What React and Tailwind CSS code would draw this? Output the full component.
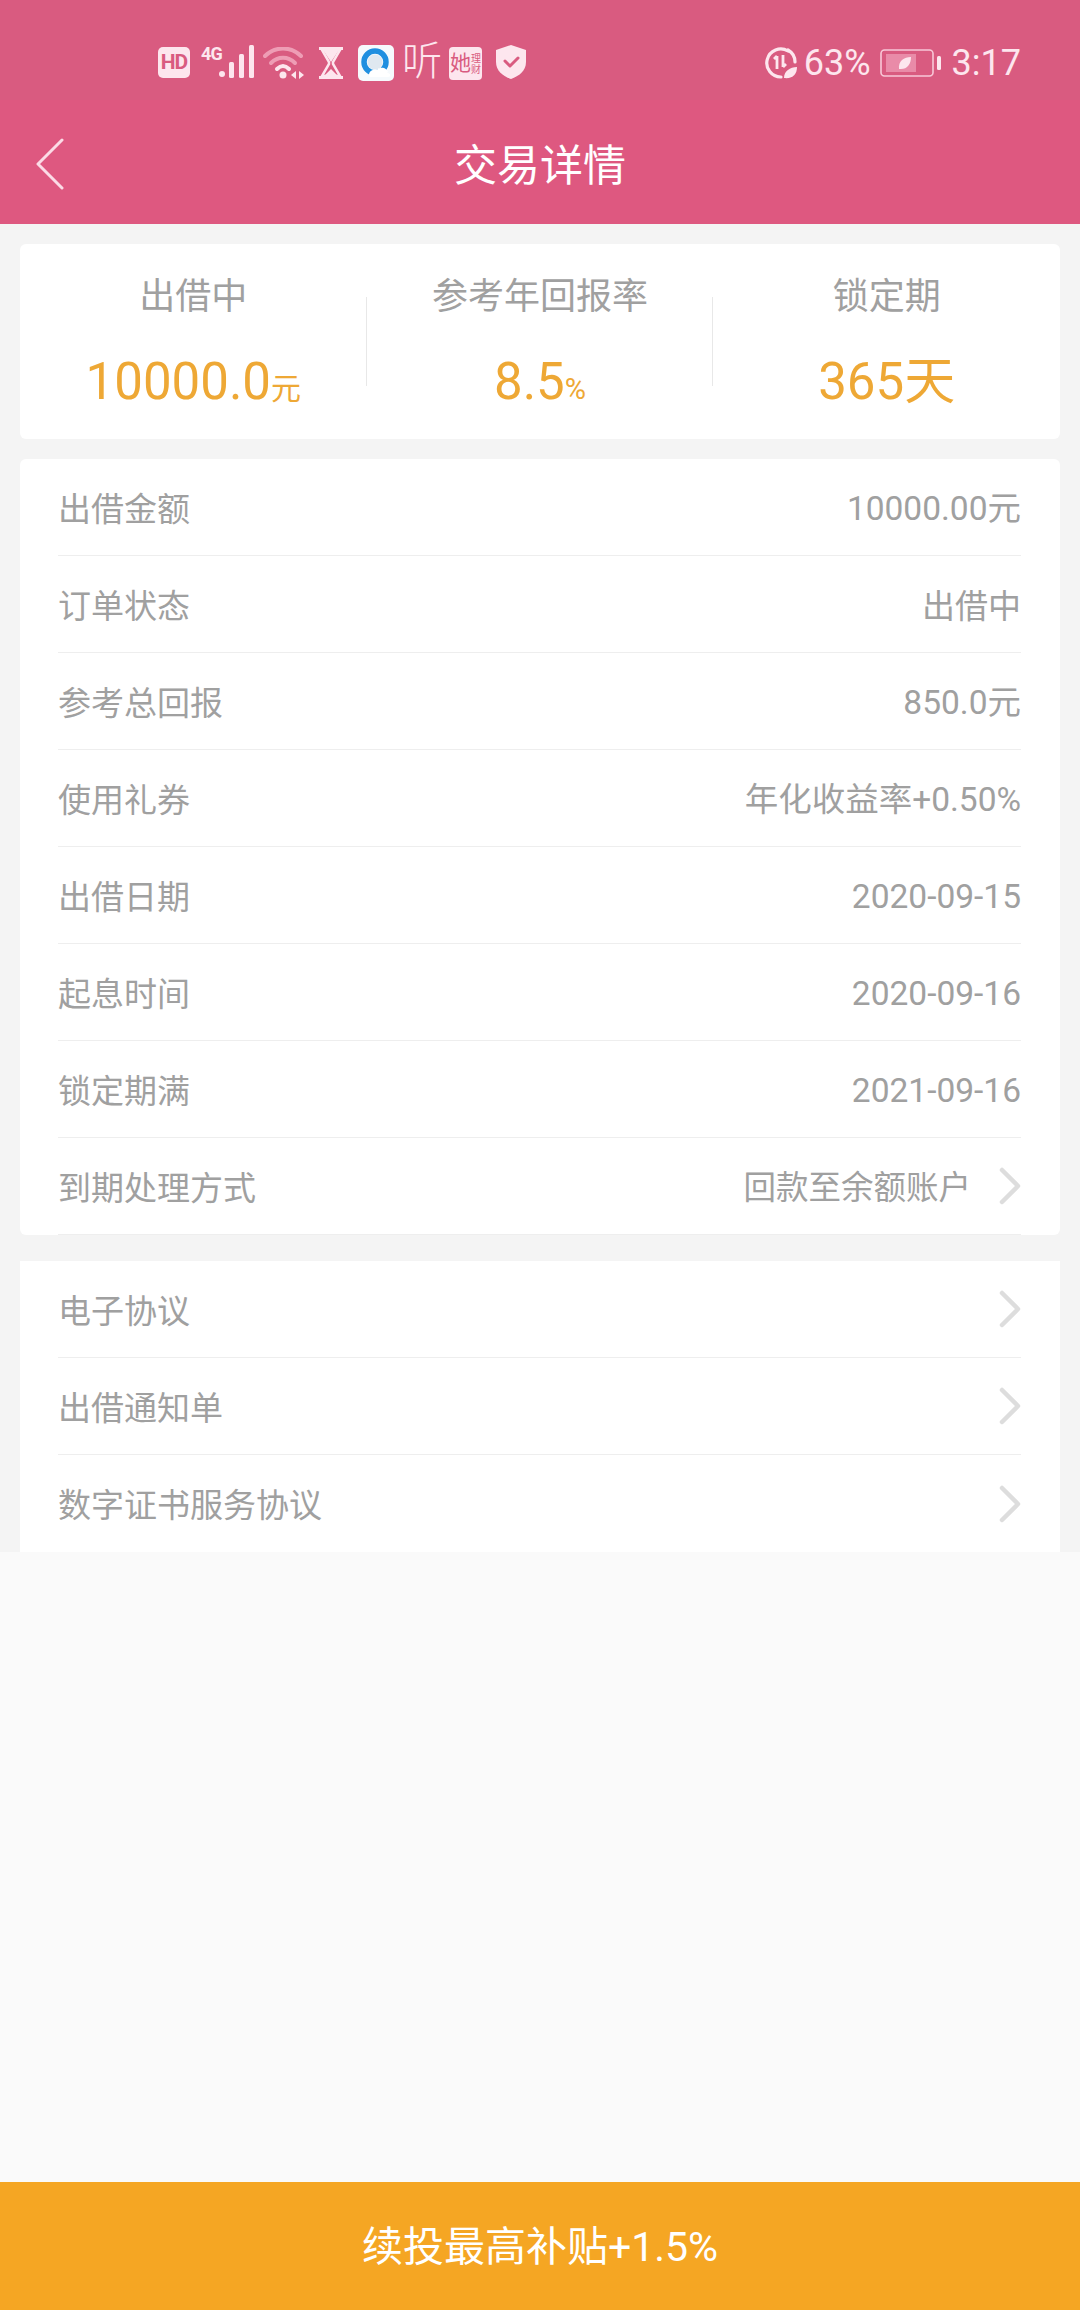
import React from "react";

const font = { fontFamily: '"Roboto", "Noto Sans CJK SC", sans-serif' };

const details = [
  { label: "出借金额", value: "10000.00元", wide: true },
  { label: "订单状态", value: "出借中" },
  { label: "参考总回报", value: "850.0元", wide: true },
  { label: "使用礼券", value: "年化收益率+0.50%", wide: true },
  { label: "出借日期", value: "2020-09-15", wide: true },
  { label: "起息时间", value: "2020-09-16", wide: true },
  { label: "锁定期满", value: "2021-09-16", wide: true },
  { label: "到期处理方式", value: "回款至余额账户", arrow: true },
];

const links = ["电子协议", "出借通知单", "数字证书服务协议"];

function Chevron() {
  return (
    <svg width="22" height="38" viewBox="0 0 22 38" className="ml-[28px] shrink-0">
      <path d="M3 3 L19 19 L3 35" fill="none" stroke="#dddddd" strokeWidth="4.5" strokeLinecap="round" strokeLinejoin="round" />
    </svg>
  );
}

function Row({ label, value, arrow, wide, last }) {
  return (
    <div className={`flex h-[97px] items-center justify-between text-[33px] text-[#a0a0a0] ${last ? "" : "border-b border-[#eeeeee]"}`}>
      <span className="mt-[5px]">{label}</span>
      <div className="flex items-center">
        {value && <span className={`mt-[5px] ${wide ? "text-[33.5px]" : ""} ${arrow ? "text-[32.5px]" : ""}`}>{value}</span>}
        {arrow && <Chevron />}
      </div>
    </div>
  );
}

function Stat({ label, children, divider }) {
  return (
    <div className="relative flex flex-1 flex-col items-center pt-[31px]">
      <span className="text-[36px] leading-[44px] text-[#a0a0a0]">{label}</span>
      <div className="mt-[33px] flex h-[60px] items-baseline text-[51px] leading-[60px] text-[#eea835]">{children}</div>
      {divider && <div className="absolute right-0 top-[53px] h-[89px] w-px bg-[#e8e8e8]" />}
    </div>
  );
}

function StatusIcons() {
  return (
    <div className="flex items-start">
      <div className="flex h-[31px] w-[32px] items-center justify-center rounded-[5px] bg-[#fde6ee] text-[21px] font-bold leading-none tracking-tighter text-[#d95b80]">HD</div>
      <div className="relative ml-[11px] h-[32px] w-[53px]">
        <span className="absolute left-0 top-[-3px] text-[18px] font-bold leading-[20px] tracking-tighter text-[#fde6ee]">4G</span>
        <svg width="36" height="33" viewBox="0 0 36 33" className="absolute left-[18px] top-[-2px]">
          <g fill="#fde6ee">
            <circle cx="3" cy="29" r="3" />
            <rect x="10" y="17" width="5" height="16" rx="1.5" />
            <rect x="20" y="9" width="5" height="24" rx="1.5" />
            <rect x="30" y="0" width="5" height="33" rx="1.5" />
          </g>
        </svg>
      </div>
      <svg width="42" height="32" viewBox="0 0 42 32" className="ml-[9px]">
        <g fill="none" strokeLinecap="round">
          <path d="M2 9 C12 -1 28 -1 38 9" stroke="#ee9db5" strokeWidth="4" />
          <path d="M8 16 C15 9 25 9 32 16" stroke="#ee9db5" strokeWidth="4" />
          <path d="M14 22 C18 18 22 18 26 22" stroke="#fde6ee" strokeWidth="4" />
        </g>
        <circle cx="20" cy="28" r="3.5" fill="#fde6ee" />
        <path d="M33 24 L28 28 L33 32 Z" fill="#fde6ee" />
        <path d="M36 24 L41 28 L36 32 Z" fill="#fde6ee" />
      </svg>
      <svg width="26" height="32" viewBox="0 0 26 32" className="ml-[13px]">
        <path d="M1 1.5 H25 M1 30.5 H25" stroke="#fde6ee" strokeWidth="3" />
        <path d="M4 3 H22 L15 15 V17 L22 29 H4 L11 17 V15 Z" fill="none" stroke="#fde6ee" strokeWidth="2.5" />
        <path d="M5 3 H21 L13 15 Z M13 22 L20 29 H6 Z" fill="#fde6ee" />
      </svg>
      <svg width="36" height="36" viewBox="0 0 36 36" className="ml-[14px] mt-[-2px]">
        <rect width="36" height="36" rx="5" fill="#f6fafd" />
        <circle cx="17" cy="17" r="11" fill="none" stroke="#1f8fe0" strokeWidth="5.5" />
        <circle cx="17" cy="17" r="7.5" fill="#dfe8f0" />
        <path d="M24 24 L28 29" stroke="#1f8fe0" strokeWidth="4" />
        <path d="M11 30 C11 25 16 24 19 25 C22 21 30 23 30 28 C33 29 33 32 30 32 H13 C11 32 11 31 11 30 Z" fill="#ffffff" />
      </svg>
      <span className="ml-[8px] mt-[-8px] text-[40px] font-light leading-[46px] text-[#fde6ee]">听</span>
      <div className="ml-[7px] flex h-[33px] w-[33px] items-center justify-center rounded-[4px] bg-[#fde6ee] text-[#d95b80]">
        <span className="text-[21px] leading-none">她</span>
        <span className="w-[10px] text-[10px] leading-[11px]">理财</span>
      </div>
      <svg width="32" height="36" viewBox="0 0 32 36" className="ml-[13px] mt-[-3px]">
        <path d="M16 1 L31 6 V18 C31 27 24 32 16 35 C8 32 1 27 1 18 V6 Z" fill="#fde6ee" />
        <path d="M10 17 L15 22 L23 14" fill="none" stroke="#d95b80" strokeWidth="3" strokeLinecap="round" strokeLinejoin="round" />
      </svg>
    </div>
  );
}

function StatusRight() {
  return (
    <div className="flex items-center text-[36px] leading-[32px] text-[#fde6ee]">
      <svg width="34" height="32" viewBox="0 0 34 32">
        <path d="M24 4 A14 14 0 1 0 17 30" fill="none" stroke="#fde6ee" strokeWidth="3.2" strokeLinecap="round" />
        <path d="M24 3 A14 14 0 0 1 31 15" fill="none" stroke="#fde6ee" strokeWidth="3.2" strokeLinecap="round" />
        <path d="M13 9 V22 M13 9 L10 12 M19 8 V20 M19 20 L22 17" fill="none" stroke="#fde6ee" strokeWidth="2.8" />
        <path d="M20 31 C20 24 26 20 33 20 C33 27 29 32 20 31 Z" fill="#fde6ee" />
      </svg>
      <span className="ml-[6px]">63%</span>
      <svg width="62" height="28" viewBox="0 0 62 28" className="ml-[9px]">
        <rect x="1" y="1" width="52" height="26" rx="3.5" fill="none" stroke="#f8c8d7" strokeWidth="1.6" />
        <rect x="6" y="5" width="30" height="18" fill="#e98ba8" />
        <path d="M19 20 C18 12 24 8 31 8 C31 15 27 21 19 20 Z" fill="#fde6ee" />
        <rect x="57" y="7" width="4" height="14" rx="1.5" fill="#fde6ee" />
      </svg>
      <span className="ml-[10px]">3:17</span>
    </div>
  );
}

export default function App() {
  return (
    <div className="flex h-[2310px] w-[1080px] flex-col overflow-hidden bg-[#fafafa]" style={font}>
      <header className="h-[224px] shrink-0 bg-[#de5880]">
        <div className="flex h-[100px] items-start justify-between bg-[#d95b80] pl-[158px] pr-[59px] pt-[47px]">
          <StatusIcons />
          <StatusRight />
        </div>
        <div className="relative flex h-[124px] items-center justify-center pt-[8px]">
          <svg width="28" height="52" viewBox="0 0 28 52" className="absolute left-[36px] top-[38px]">
            <path d="M26 2 L2 26 L26 50" fill="none" stroke="#fbdbe6" strokeWidth="3" strokeLinecap="round" strokeLinejoin="round" />
          </svg>
          <h1 className="text-[43px] font-normal text-white">交易详情</h1>
        </div>
      </header>

      <div className="bg-[#f4f4f4] px-[20px] pt-[20px]">
        <section className="flex h-[195px] rounded-[6px] bg-white">
          <Stat label="出借中" divider>
            <span>10000.0</span>
            <span className="text-[30px]">元</span>
          </Stat>
          <Stat label="参考年回报率" divider>
            <span>8.5</span>
            <span className="text-[29px]">%</span>
          </Stat>
          <Stat label="锁定期">
            <span>365天</span>
          </Stat>
        </section>

        <section className="mt-[20px] rounded-[6px] bg-white pl-[38px] pr-[39px]">
          {details.map((row) => (
            <Row key={row.label} {...row} />
          ))}
        </section>

        <section className="mt-[26px] bg-white pl-[38px] pr-[39px]">
          {links.map((label, i) => (
            <Row key={label} label={label} arrow last={i === links.length - 1} />
          ))}
        </section>
      </div>

      <div className="flex-1" />

      <button type="button" className="flex h-[128px] shrink-0 items-center justify-center bg-[#f5a623] pt-[3px] text-[41px] text-white">
        续投最高补贴+1.5%
      </button>
    </div>
  );
}
